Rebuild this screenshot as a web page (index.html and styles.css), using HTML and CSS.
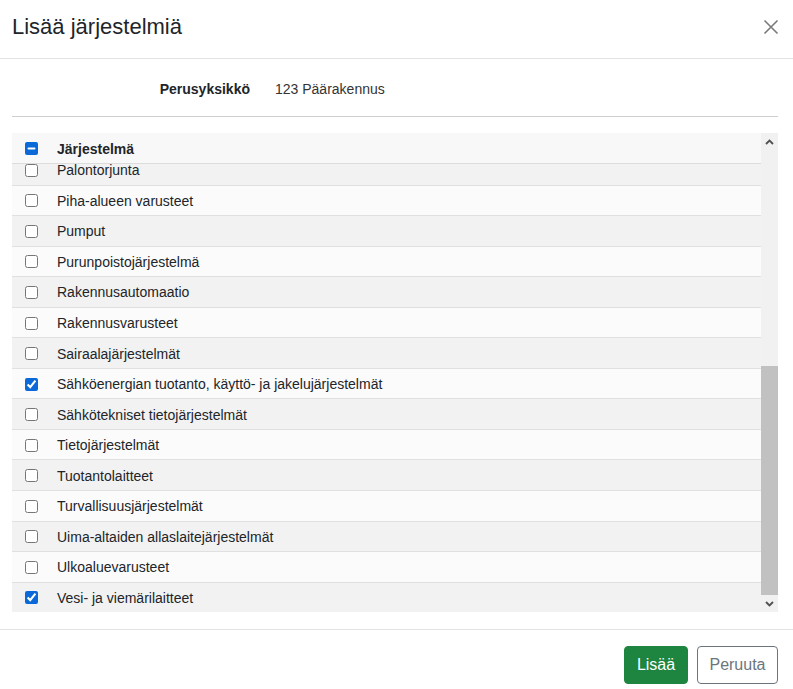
FILE: index.html
```html
<!DOCTYPE html>
<html lang="fi">

<head>
    <meta charset="UTF-8">
    <meta name="viewport" content="width=device-width, initial-scale=1.0">
    <title>Lisää järjestelmiä</title>
    <link rel="stylesheet" href="styles.css">
</head>

<body>
    <div class="modal">
        <div class="modal-header">
            <h4 class="modal-title">Lisää järjestelmiä</h4>
            <button class="close" type="button" aria-label="Sulje">
                <svg width="16" height="16" viewBox="0 0 16 16">
                    <path d="M1.5 1.5 L14.5 14.5 M14.5 1.5 L1.5 14.5" stroke="#7a7a7a" stroke-width="1.6" fill="none"/>
                </svg>
            </button>
        </div>

        <div class="modal-body">
            <div class="info-row">
                <span class="info-label">Perusyksikkö</span>
                <span class="info-value">123 Päärakennus</span>
            </div>

            <div class="list">
                <div class="list-main">
                    <div class="list-head">
                        <input type="checkbox" id="checkAll" checked>
                        <span>Järjestelmä</span>
                    </div>
                    <div class="list-rows">
                        <label class="row first"><input type="checkbox"> Palontorjunta</label>
                        <label class="row"><input type="checkbox"> Piha-alueen varusteet</label>
                        <label class="row"><input type="checkbox"> Pumput</label>
                        <label class="row"><input type="checkbox"> Purunpoistojärjestelmä</label>
                        <label class="row"><input type="checkbox"> Rakennusautomaatio</label>
                        <label class="row"><input type="checkbox"> Rakennusvarusteet</label>
                        <label class="row"><input type="checkbox"> Sairaalajärjestelmät</label>
                        <label class="row"><input type="checkbox" checked> Sähköenergian tuotanto, käyttö- ja jakelujärjestelmät</label>
                        <label class="row"><input type="checkbox"> Sähkötekniset tietojärjestelmät</label>
                        <label class="row"><input type="checkbox"> Tietojärjestelmät</label>
                        <label class="row"><input type="checkbox"> Tuotantolaitteet</label>
                        <label class="row"><input type="checkbox"> Turvallisuusjärjestelmät</label>
                        <label class="row"><input type="checkbox"> Uima-altaiden allaslaitejärjestelmät</label>
                        <label class="row"><input type="checkbox"> Ulkoaluevarusteet</label>
                        <label class="row"><input type="checkbox" checked> Vesi- ja viemärilaitteet</label>
                    </div>
                </div>
                <div class="scrollbar">
                    <div class="sb-btn">
                        <svg width="9" height="6" viewBox="0 0 9 6"><path d="M1 5 L4.5 1.5 L8 5" stroke="#505050" stroke-width="1.8" fill="none"/></svg>
                    </div>
                    <div class="sb-track">
                        <div class="sb-thumb"></div>
                    </div>
                    <div class="sb-btn">
                        <svg width="9" height="6" viewBox="0 0 9 6"><path d="M1 1 L4.5 4.5 L8 1" stroke="#505050" stroke-width="1.8" fill="none"/></svg>
                    </div>
                </div>
            </div>
        </div>

        <div class="modal-footer">
            <button type="button" class="btn btn-success">Lisää</button>
            <button type="button" class="btn btn-outline">Peruuta</button>
        </div>
    </div>

    <script>
        // Otsikkorivin valinta on osittainen
        document.getElementById("checkAll").indeterminate = true;
    </script>
</body>

</html>
```

FILE: styles.css
```css
body {
    font-family: "Liberation Sans", Arial, sans-serif;
    font-size: 14px;
    color: #212529;
    background-color: #ffffff;
    margin: 0;
    padding: 0;
}

.modal {
    width: 793px;
    height: 689px;
    display: flex;
    flex-direction: column;
}

.modal-header {
    height: 59px;
    box-sizing: border-box;
    border-bottom: 1px solid #e2e2e2;
    display: flex;
    align-items: center;
    justify-content: space-between;
    padding: 0 14px 4px 12px;
}

.modal-title {
    margin: 0;
    font-size: 22px;
    font-weight: normal;
    color: #212529;
}

.close {
    border: none;
    background: none;
    padding: 0;
    width: 16px;
    height: 16px;
    cursor: pointer;
}

.modal-body {
    flex: 1;
    padding: 0 15px 0 12px;
}

.info-row {
    height: 58px;
    box-sizing: border-box;
    border-bottom: 1px solid #cfcfcf;
    display: flex;
    align-items: center;
    padding-top: 2px;
}

.info-label {
    width: 263px;
    text-align: right;
    font-weight: bold;
    padding-right: 25px;
    box-sizing: border-box;
}

.info-value {
    color: #333333;
}

.list {
    margin-top: 16px;
    height: 479px;
    display: flex;
}

.list-main {
    flex: 1;
    display: flex;
    flex-direction: column;
    min-width: 0;
}

.list-head {
    height: 31px;
    box-sizing: border-box;
    background-color: #f8f8f8;
    border-bottom: 1px solid #dcdcdc;
    display: flex;
    align-items: center;
    font-weight: bold;
    padding-top: 1px;
    position: relative;
    z-index: 1;
}

.list-rows {
    flex: 1;
    overflow: hidden;
}

.row {
    height: 30.55px;
    box-sizing: border-box;
    border-bottom: 1px solid #e0e0e0;
    background-color: #fbfbfb;
    display: flex;
    align-items: center;
    padding-top: 1px;
}

.row:nth-child(odd) {
    background-color: #f2f2f2;
}

.row.first {
    margin-top: -9px;
}

.list input[type="checkbox"] {
    width: 13px;
    height: 13px;
    margin: 0 19px 0 13px;
    accent-color: #0a68d8;
}

.scrollbar {
    width: 17px;
    background-color: #f1f1f1;
    display: flex;
    flex-direction: column;
}

.sb-btn {
    height: 17px;
    display: flex;
    align-items: center;
    justify-content: center;
}

.sb-track {
    flex: 1;
    display: flex;
    flex-direction: column;
    justify-content: flex-end;
}

.sb-thumb {
    height: 229px;
    background-color: #c1c1c1;
}

.modal-footer {
    height: 60px;
    box-sizing: border-box;
    border-top: 1px solid #e2e2e2;
    display: flex;
    justify-content: flex-end;
    align-items: flex-start;
    gap: 9px;
    padding: 16px 15px 0 0;
}

.btn {
    height: 38px;
    font-family: "Liberation Sans", Arial, sans-serif;
    font-size: 16px;
    border-radius: 4px;
    padding: 0 11px;
    cursor: pointer;
}

.btn-success {
    background-color: #1e8540;
    border: 1px solid #1e8540;
    color: #ffffff;
    width: 64px;
}

.btn-outline {
    background-color: #ffffff;
    border: 1px solid #6c757d;
    color: #6c757d;
    width: 81px;
}
```
